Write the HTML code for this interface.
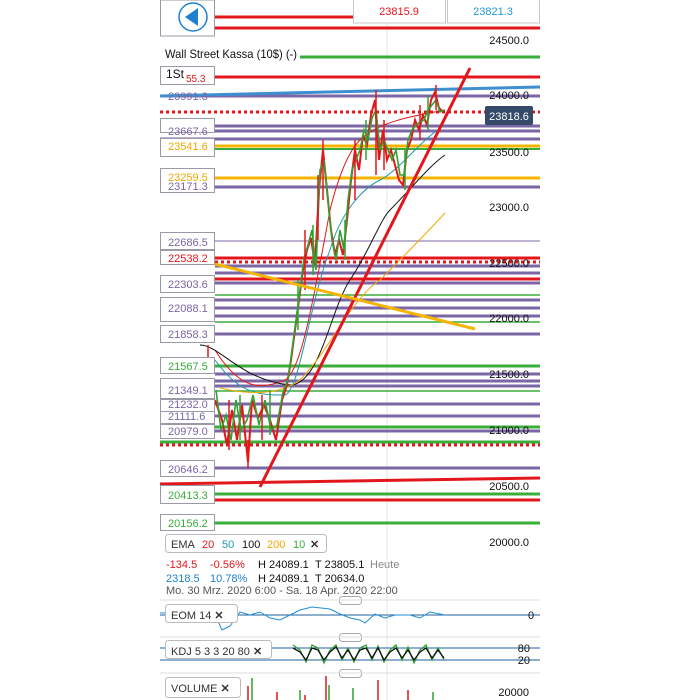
<!DOCTYPE html>
<html><head><meta charset="utf-8"><style>
html,body{margin:0;padding:0;background:#fff;}
body{width:700px;height:700px;position:relative;overflow:hidden;font-family:"Liberation Sans",sans-serif;}
svg{position:absolute;left:0;top:0;}
.t{font-family:"Liberation Sans",sans-serif;}
</style></head><body>
<svg width="700" height="700" viewBox="0 0 700 700">
<rect x="160" y="0" width="380" height="700" fill="#fff"/>
<line x1="387" y1="0" x2="387" y2="700" stroke="#e6e6e6"/>
<g stroke-width="3">
<line x1="215" y1="17" x2="353" y2="17" stroke="#e3171b"/>
<line x1="160" y1="28" x2="540" y2="28" stroke="#e3171b"/>
<line x1="300" y1="57" x2="540" y2="57" stroke="#3aad3a"/>
<line x1="215" y1="77" x2="540" y2="77" stroke="#e3171b"/>
<line x1="160" y1="96" x2="540" y2="96" stroke="#7b66a6"/>
<line x1="160" y1="112" x2="540" y2="112" stroke="#e3171b" stroke-dasharray="3,3"/>
<line x1="160" y1="126" x2="540" y2="126" stroke="#7b66a6"/>
<line x1="160" y1="131" x2="540" y2="131" stroke="#7b66a6"/>
<line x1="160" y1="139" x2="540" y2="139" stroke="#7b66a6"/>
<line x1="160" y1="146" x2="540" y2="146" stroke="#f5b400"/>
<line x1="160" y1="149" x2="540" y2="149" stroke="#3aad3a" stroke-width="2"/>
<line x1="160" y1="178" x2="540" y2="178" stroke="#f5b400"/>
<line x1="160" y1="187" x2="540" y2="187" stroke="#7b66a6"/>
<line x1="215" y1="241" x2="540" y2="241" stroke="#7b66a6" stroke-width="1"/>
<line x1="215" y1="258" x2="540" y2="258" stroke="#e3171b"/>
<line x1="215" y1="262" x2="540" y2="262" stroke="#e3171b" stroke-dasharray="3,3"/>
<line x1="215" y1="266" x2="540" y2="266" stroke="#7b66a6"/>
<line x1="215" y1="273" x2="540" y2="273" stroke="#7b66a6"/>
<line x1="215" y1="279" x2="540" y2="279" stroke="#e3171b"/>
<line x1="215" y1="283" x2="540" y2="283" stroke="#7b66a6"/>
<line x1="215" y1="295" x2="540" y2="295" stroke="#3aad3a" stroke-width="1.5"/>
<line x1="215" y1="300" x2="540" y2="300" stroke="#7b66a6"/>
<line x1="215" y1="308" x2="540" y2="308" stroke="#7b66a6"/>
<line x1="215" y1="316" x2="540" y2="316" stroke="#7b66a6"/>
<line x1="215" y1="322" x2="540" y2="322" stroke="#3aad3a" stroke-width="1.5"/>
<line x1="215" y1="334" x2="540" y2="334" stroke="#7b66a6"/>
<line x1="215" y1="366" x2="540" y2="366" stroke="#3aad3a"/>
<line x1="215" y1="374" x2="540" y2="374" stroke="#7b66a6"/>
<line x1="215" y1="381" x2="540" y2="381" stroke="#7b66a6"/>
<line x1="215" y1="386" x2="540" y2="386" stroke="#7b66a6"/>
<line x1="215" y1="391" x2="540" y2="391" stroke="#3aad3a" stroke-width="1.5"/>
<line x1="215" y1="404" x2="540" y2="404" stroke="#7b66a6"/>
<line x1="215" y1="416" x2="540" y2="416" stroke="#7b66a6"/>
<line x1="215" y1="427" x2="540" y2="427" stroke="#3aad3a"/>
<line x1="215" y1="431" x2="540" y2="431" stroke="#7b66a6"/>
<line x1="160" y1="442" x2="540" y2="442" stroke="#3aad3a"/>
<line x1="160" y1="445" x2="540" y2="445" stroke="#e3171b" stroke-dasharray="3,3"/>
<line x1="215" y1="468" x2="540" y2="468" stroke="#7b66a6"/>
<line x1="160" y1="484" x2="540" y2="478" stroke="#e3171b"/>
<line x1="215" y1="494" x2="540" y2="494" stroke="#3aad3a"/>
<line x1="215" y1="500" x2="540" y2="500" stroke="#e3171b"/>
<line x1="215" y1="523" x2="540" y2="523" stroke="#3aad3a"/>
</g>
<line x1="160" y1="96" x2="540" y2="87" stroke="#3f8fd0" stroke-width="3"/>
<g fill="none" stroke-width="1">
<path d="M215,350 C240,390 260,390 285,380 C300,370 310,320 330,210 C340,170 350,150 360,140 C380,120 420,115 445,110" stroke="#e3171b"/>
<path d="M215,360 C240,395 260,395 285,395 C300,390 310,300 330,250 C340,215 360,190 380,180 C400,170 420,140 445,125" stroke="#1e9aa8"/>
<path d="M200,345 C220,345 240,380 290,385 C320,385 330,310 350,280 C370,250 380,220 390,210 C410,190 430,165 445,155" stroke="#111"/>
<path d="M220,388 C250,395 280,395 300,380 C330,350 350,300 380,280 C400,260 420,240 445,213" stroke="#f5a800"/>
</g>
<polyline fill="none" stroke="#e3171b" stroke-width="2" points="215,400 222,420 227,445 232,410 237,440 242,405 248,462 252,400 258,418 264,405 270,420 276,440 282,400 287,385 291,360 295,330 299,300 303,270 307,250 311,238 315,265 319,190 323,150 327,190 331,230 335,255 339,240 343,255 347,220 351,180 355,150 359,170 363,135 367,145 371,115 375,100 379,160 383,130 387,160 391,150 395,165 399,180 403,185 407,150 411,140 415,120 419,130 423,115 427,125 431,100 435,92 439,108 443,112"/>
<polyline fill="none" stroke="#2fa32f" stroke-width="1.6" points="216,390 221,430 226,415 231,440 236,400 241,430 247,420 253,395 259,425 265,400 271,430 277,425 283,392 288,380 292,350 296,320 300,290 304,258 308,245 312,230 316,270 320,170 324,160 328,200 332,240 336,260 340,230 344,250 348,200 352,170 356,160 360,150 364,130 368,140 372,118 376,110 380,150 384,140 388,150 392,160 396,150 400,175 404,175 408,140 412,130 416,125 420,122 424,120 428,110 432,105 436,100 440,112 444,110"/>
<g stroke="#e3171b" stroke-width="1.5">
<line x1="248" y1="440" x2="248" y2="468"/><line x1="208" y1="345" x2="208" y2="360"/><line x1="376" y1="90" x2="376" y2="175"/><line x1="323" y1="140" x2="323" y2="200"/><line x1="305" y1="230" x2="305" y2="290"/><line x1="436" y1="85" x2="436" y2="110"/>
<line x1="229" y1="400" x2="229" y2="450"/><line x1="262" y1="395" x2="262" y2="440"/><line x1="318" y1="175" x2="318" y2="240"/><line x1="355" y1="140" x2="355" y2="200"/><line x1="384" y1="120" x2="384" y2="170"/><line x1="420" y1="105" x2="420" y2="140"/>
</g>
<g stroke="#2fa32f" stroke-width="1.5">
<line x1="240" y1="395" x2="240" y2="440"/><line x1="270" y1="390" x2="270" y2="435"/><line x1="298" y1="280" x2="298" y2="330"/><line x1="313" y1="225" x2="313" y2="275"/><line x1="345" y1="220" x2="345" y2="260"/><line x1="366" y1="120" x2="366" y2="160"/><line x1="405" y1="150" x2="405" y2="190"/><line x1="428" y1="95" x2="428" y2="130"/>
</g>
<line x1="260" y1="487" x2="470" y2="68" stroke="#e3171b" stroke-width="3"/>
<line x1="215" y1="264" x2="475" y2="329" stroke="#f5b400" stroke-width="3"/>
<g font-size="11" class="t" fill="#7b66a6">
<g stroke="#9a9aa6" fill="#fff">
<rect x="160.5" y="118.5" width="54" height="14"/><rect x="160.5" y="138.5" width="54" height="18"/>
<rect x="160.5" y="168.5" width="54" height="24"/>
<rect x="160.5" y="232.5" width="54" height="17"/><rect x="160.5" y="250.5" width="54" height="14"/>
<rect x="160.5" y="275.5" width="54" height="17"/><rect x="160.5" y="297.5" width="54" height="24"/>
<rect x="160.5" y="325.5" width="54" height="17"/><rect x="160.5" y="357.5" width="54" height="16"/>
<rect x="160.5" y="378.5" width="54" height="20"/><rect x="160.5" y="399.5" width="54" height="12"/>
<rect x="160.5" y="411.5" width="54" height="12"/><rect x="160.5" y="424.5" width="54" height="14"/>
<rect x="160.5" y="460.5" width="54" height="16"/><rect x="160.5" y="485.5" width="54" height="18"/>
<rect x="160.5" y="514.5" width="54" height="16"/>
</g>
<text x="168" y="135">23667.6</text>
<text x="168" y="150" fill="#f0a800">23541.6</text>
<text x="168" y="181" fill="#f0a800">23259.5</text>
<text x="168" y="190">23171.3</text>
<text x="168" y="246">22686.5</text>
<text x="168" y="262" fill="#e3171b">22538.2</text>
<text x="168" y="288">22303.6</text>
<text x="168" y="312">22088.1</text>
<text x="168" y="338">21858.3</text>
<text x="168" y="370" fill="#3aad3a">21567.5</text>
<text x="168" y="394">21349.1</text>
<text x="168" y="408">21232.0</text>
<text x="168" y="420">21111.6</text>
<text x="168" y="435">20979.0</text>
<text x="168" y="473">20646.2</text>
<text x="168" y="499" fill="#3aad3a">20413.3</text>
<text x="168" y="527" fill="#3aad3a">20156.2</text>
<text x="168" y="100">23991.3</text>
</g>
<rect x="160.5" y="0" width="54" height="36" fill="#fff" stroke="#9a9aa6"/>
<circle cx="193" cy="17" r="14" fill="#fff" stroke="#1f7fd0" stroke-width="1.5"/>
<path d="M185,17 L198,8 L198,26 Z" fill="#1f7fd0"/>
<rect x="353.5" y="-2" width="92" height="25" fill="#fff" stroke="#c8c8c8"/>
<rect x="447.5" y="-2" width="92" height="25" fill="#fff" stroke="#c8c8c8"/>
<text x="399" y="15" font-size="11" fill="#e3171b" text-anchor="middle" class="t">23815.9</text>
<text x="493" y="15" font-size="11" fill="#1f9ad6" text-anchor="middle" class="t">23821.3</text>
<rect x="160" y="44" width="138" height="18" fill="#fff"/>
<text x="165" y="58" font-size="12" fill="#111" class="t" textLength="132" lengthAdjust="spacingAndGlyphs">Wall Street Kassa (10$) (-)</text>
<rect x="160.5" y="66.5" width="54" height="18" fill="#fff" stroke="#9a9aa6"/>
<text x="166" y="78" font-size="12" fill="#111" class="t">1St</text>
<text x="186" y="82" font-size="10" fill="#e3171b" class="t">55.3</text>
<g font-size="11" fill="#111" text-anchor="end" class="t">
<text x="529" y="44">24500.0</text><text x="529" y="99">24000.0</text><text x="529" y="156">23500.0</text>
<text x="529" y="211">23000.0</text><text x="529" y="267">22500.0</text><text x="529" y="322">22000.0</text>
<text x="529" y="378">21500.0</text><text x="529" y="434">21000.0</text><text x="529" y="490">20500.0</text>
<text x="529" y="546">20000.0</text>
</g>
<rect x="485" y="106" width="48" height="19" rx="2" fill="#344a68"/>
<text x="509" y="120" font-size="11" fill="#fff" text-anchor="middle" class="t">23818.6</text>
<rect x="165.5" y="534.5" width="161" height="18" rx="3" fill="#fff" stroke="#bbb"/>
<g font-size="11" class="t">
<text x="171" y="548" fill="#333">EMA</text><text x="202" y="548" fill="#e3171b">20</text><text x="222" y="548" fill="#1e9aa8">50</text>
<text x="242" y="548" fill="#111">100</text><text x="267" y="548" fill="#f0a800">200</text><text x="293" y="548" fill="#3aad3a">10</text>
<text x="310" y="548" fill="#333" font-weight="bold">✕</text>
<text x="166" y="568" fill="#e3171b">-134.5</text><text x="210" y="568" fill="#e3171b">-0.56%</text>
<text x="258" y="568" fill="#111">H 24089.1</text><text x="315" y="568" fill="#111">T 23805.1</text><text x="370" y="568" fill="#888">Heute</text>
<text x="166" y="582" fill="#1f7fd0">2318.5</text><text x="210" y="582" fill="#1f7fd0">10.78%</text>
<text x="258" y="582" fill="#111">H 24089.1</text><text x="315" y="582" fill="#111">T 20634.0</text>
<text x="166" y="594" fill="#555">Mo. 30 Mrz. 2020 6:00 - Sa. 18 Apr. 2020 22:00</text>
</g>
<g fill="#fff" stroke="#aaa"><rect x="339.5" y="596.5" width="22" height="8" rx="3"/><rect x="339.5" y="633.5" width="22" height="8" rx="3"/><rect x="339.5" y="669.5" width="22" height="8" rx="3"/></g>
<line x1="160" y1="600" x2="540" y2="600" stroke="#ddd"/>
<line x1="160" y1="637" x2="540" y2="637" stroke="#ddd"/>
<line x1="160" y1="673" x2="540" y2="673" stroke="#ddd"/>
<line x1="160" y1="615" x2="540" y2="615" stroke="#1f5f9f"/>
<path d="M160,613 L200,612 215,615 222,630 230,626 240,612 250,615 260,612 270,618 280,620 290,615 300,610 312,607 330,609 340,614 350,618 360,620 365,623 375,614 385,618 395,615 410,615 420,618 430,612 445,615" fill="none" stroke="#1f8fd8"/>
<rect x="165.5" y="604.5" width="72" height="18" rx="3" fill="#fff" stroke="#bbb"/>
<text x="171" y="619" font-size="11" fill="#333" class="t">EOM  14  <tspan font-weight="bold">✕</tspan></text>
<text x="528" y="619" font-size="11" fill="#111" class="t">0</text>
<line x1="160" y1="648" x2="540" y2="648" stroke="#1f5f9f"/>
<line x1="160" y1="660" x2="540" y2="660" stroke="#1f5f9f"/>
<path d="M293,645 L300,650 306,662 312,645 318,648 324,663 330,650 336,645 342,660 348,648 354,662 360,648 366,645 372,660 378,646 384,662 390,650 396,645 402,660 408,647 414,663 420,650 426,645 432,660 438,648 444,660" fill="none" stroke="#2fa32f" stroke-width="1.3"/>
<path d="M293,648 L300,652 306,660 312,648 318,650 324,660 330,652 336,647 342,658 348,650 354,660 360,650 366,648 372,658 378,648 384,660 390,652 396,648 402,658 408,650 414,660 420,652 426,648 432,658 438,650 444,658" fill="none" stroke="#111" stroke-width="1.3"/>
<rect x="165.5" y="640.5" width="106" height="18" rx="3" fill="#fff" stroke="#bbb"/>
<text x="171" y="655" font-size="11" fill="#333" class="t">KDJ  5  3  3  20  80  <tspan font-weight="bold">✕</tspan></text>
<text x="530" y="652" font-size="11" fill="#111" text-anchor="end" class="t">80</text>
<text x="530" y="664" font-size="11" fill="#111" text-anchor="end" class="t">20</text>
<g stroke-width="1.5">
<line x1="248" y1="686" x2="248" y2="700" stroke="#e3171b"/><line x1="252" y1="678" x2="252" y2="700" stroke="#2fa32f"/>
<line x1="277" y1="692" x2="277" y2="700" stroke="#e3171b"/><line x1="300" y1="690" x2="300" y2="700" stroke="#2fa32f"/>
<line x1="305" y1="695" x2="305" y2="700" stroke="#e3171b"/><line x1="326" y1="676" x2="326" y2="700" stroke="#e3171b"/>
<line x1="329" y1="685" x2="329" y2="700" stroke="#2fa32f"/><line x1="353" y1="688" x2="353" y2="700" stroke="#2fa32f"/>
<line x1="378" y1="680" x2="378" y2="700" stroke="#e3171b"/><line x1="408" y1="690" x2="408" y2="700" stroke="#e3171b"/>
<line x1="433" y1="692" x2="433" y2="700" stroke="#2fa32f"/>
</g>
<rect x="165.5" y="677.5" width="75" height="20" rx="3" fill="#fff" stroke="#bbb"/>
<text x="171" y="692" font-size="11" fill="#333" class="t">VOLUME  <tspan font-weight="bold">✕</tspan></text>
<text x="529" y="696" font-size="11" fill="#111" text-anchor="end" class="t">20000</text>
</svg>
</body></html>
